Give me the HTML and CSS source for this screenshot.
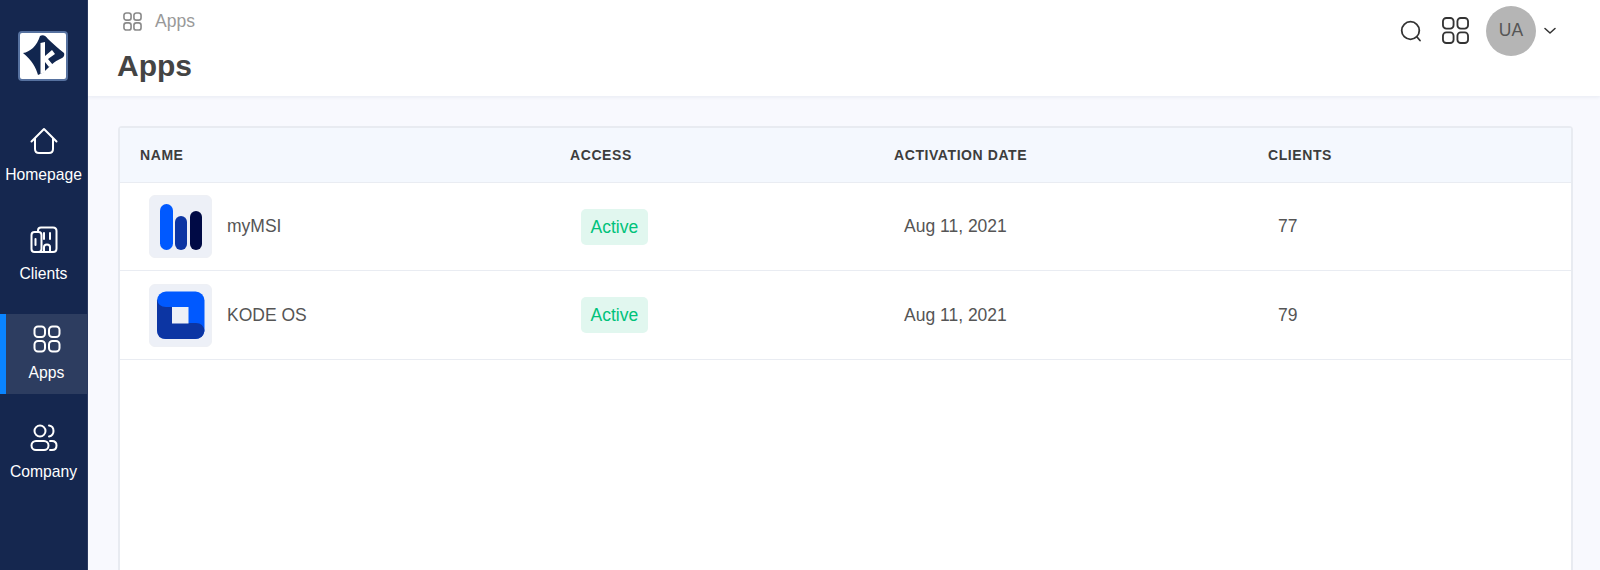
FILE: index.html
```html
<!DOCTYPE html>
<html lang="en">
<head>
<meta charset="utf-8">
<title>Apps</title>
<link rel="stylesheet" href="styles.css">
</head>
<body>
<div class="app">
  <aside class="sidebar">
    <div class="logo">
      <svg viewBox="0 0 46 46" width="46" height="46">
        <path d="M3 20 C10 19 17 13 20 3 C23 1 26 3 28 6 C33 11 38 15 44 20 C45 23 43 25 40 26 C35 28 30 33 26 37 C23 40 20 41 18 42 C16 35 12 27 3 20Z" fill="#11264f"/>
        <path d="M20.500 10 L25 9 L25 23 L32 17 L35 21 L28 26 L33 32 L29 34 L25 29 L25 39 L20.500 41Z" fill="#fff"/>
      </svg>
    </div>
    <nav class="menu">
      <a class="menu-item">
        <svg class="nav-icon" viewBox="0 0 28 28"><path d="M1.5 14.5 L14 2 L26.5 14.5 M5 11.5 V22 Q5 26 9 26 H19 Q23 26 23 22 V11.5"/></svg>
        <span>Homepage</span>
      </a>
      <a class="menu-item">
        <svg class="nav-icon" viewBox="0 0 28 28"><rect x="1.5" y="6" width="10" height="20" rx="3"/><path d="M8 6 V4.5 Q8 1.5 11 1.5 H23 Q26.500 1.500 26.500 5 V22.500 Q26.500 26 23 26 H6"/><path d="M5.500 13 V19 M14 7 V13 M20 7 V13 M14 26 V21 Q14 18.500 17 18.500 Q20 18.500 20 21 V26"/></svg>
        <span>Clients</span>
      </a>
      <a class="menu-item active">
        <svg class="nav-icon" viewBox="0 0 28 28"><rect x="1.500" y="1.500" width="10.500" height="10.500" rx="3.500"/><rect x="16" y="1.500" width="10.500" height="10.500" rx="3.500"/><rect x="1.500" y="16" width="10.500" height="10.500" rx="3.500"/><rect x="16" y="16" width="10.500" height="10.500" rx="3.500"/></svg>
        <span>Apps</span>
      </a>
      <a class="menu-item">
        <svg class="nav-icon" viewBox="0 0 28 28"><circle cx="10" cy="7" r="5.500"/><path d="M19 1.500 Q23.500 2 23.500 7 Q23.500 11.500 19 12.500"/><rect x="1.500" y="17" width="17" height="9" rx="4.500"/><path d="M20 17 H22 Q26.500 17 26.500 21.500 Q26.500 26 22 26 H20"/></svg>
        <span>Company</span>
      </a>
    </nav>
  </aside>
  <main class="main">
    <header class="topbar">
      <div class="heading">
        <div class="crumb">
          <svg class="crumb-icon" viewBox="0 0 20 20"><rect x="1" y="1" width="7.500" height="7.500" rx="2.500"/><rect x="11.500" y="1" width="7.500" height="7.500" rx="2.500"/><rect x="1" y="11.500" width="7.500" height="7.500" rx="2.500"/><rect x="11.500" y="11.500" width="7.500" height="7.500" rx="2.500"/></svg>
          <span>Apps</span>
        </div>
        <h1 class="title">Apps</h1>
      </div>
      <div class="actions">
        <svg class="search" viewBox="0 0 22 22"><circle cx="10.500" cy="10.500" r="8.800"/><path d="M17 17 L20 20.500"/></svg>
        <svg class="grid-icon" viewBox="0 0 28 28"><rect x="1" y="1" width="11" height="11" rx="3.500"/><rect x="16" y="1" width="11" height="11" rx="3.500"/><rect x="1" y="16" width="11" height="11" rx="3.500"/><rect x="16" y="16" width="11" height="11" rx="3.500"/></svg>
        <div class="avatar">UA</div>
        <svg class="chevron" viewBox="0 0 12 8"><path d="M1 1.500 L6 6 L11 1.500"/></svg>
      </div>
    </header>
    <section class="content">
      <div class="card">
        <div class="row head">
          <div>NAME</div><div>ACCESS</div><div>ACTIVATION DATE</div><div>CLIENTS</div>
        </div>
        <div class="row item">
          <div class="name">
            <span class="thumb">
              <svg viewBox="1 1 61 61" width="61" height="61">
                <rect x="11" y="9" width="13" height="46" rx="6.500" fill="#0059ff"/>
                <rect x="26" y="21" width="12" height="34" rx="6" fill="#0c35a3"/>
                <rect x="41" y="16" width="12" height="39" rx="6" fill="#000a45"/>
              </svg>
            </span>
            <span>myMSI</span>
          </div>
          <div class="access"><span class="badge">Active</span></div>
          <div class="date">Aug 11, 2021</div>
          <div class="count">77</div>
        </div>
        <div class="row item">
          <div class="name">
            <span class="thumb">
              <svg viewBox="1 1 61 61" width="61" height="61">
                <rect x="8" y="7.500" width="47.500" height="47.500" rx="9" fill="#0059ff"/>
                <path d="M8 15 Q9 23 17 23 H23 V39 H47 Q54.500 39 55.500 47 Q54 55 46 55 H17 Q8 55 8 46Z" fill="#0c35a3"/>
                <rect x="23" y="23" width="16.500" height="16.500" fill="#edf0f7"/>
              </svg>
            </span>
            <span>KODE OS</span>
          </div>
          <div class="access"><span class="badge">Active</span></div>
          <div class="date">Aug 11, 2021</div>
          <div class="count">79</div>
        </div>
      </div>
    </section>
  </main>
</div>
</body>
</html>
```
FILE: styles.css
```css
* { box-sizing: border-box; }
html, body { margin: 0; height: 100%; overflow: hidden; }
body { font-family: "Liberation Sans", Arial, sans-serif; color: #444; background: #f8f9fe; }
.app { display: flex; height: 570px; }

.sidebar { width: 88px; flex: none; background: #15274f; border-right: 1px solid #2b3a60; display: flex; flex-direction: column; align-items: stretch; padding-top: 31px; }
.logo { width: 50px; height: 50px; margin-left: 18px; background: #fff; border: 2px solid #56719f; border-radius: 4px; display: flex; }
.menu { display: flex; flex-direction: column; gap: 19px; margin-top: 35px; }
.menu-item { height: 80px; display: flex; flex-direction: column; align-items: center; padding-top: 11px; color: #fff; font-size: 15.700px; line-height: 18px; gap: 11px; }
.menu-item.active { background: #2d3d60; border-left: 6px solid #0a84ff; }
.nav-icon { width: 28px; height: 28px; fill: none; stroke: #fff; stroke-width: 2; stroke-linecap: round; stroke-linejoin: round; }

.main { flex: 1; min-width: 0; display: flex; flex-direction: column; }
.topbar { height: 96px; flex: none; background: #fff; box-shadow: 0 1px 4px rgba(30, 50, 90, .08); display: flex; justify-content: space-between; padding: 0 44px 0 29px; position: relative; }
.crumb { display: flex; align-items: center; gap: 13px; height: 21px; margin-top: 11px; margin-left: 6px; color: #999; font-size: 17.500px; }
.crumb-icon { width: 19px; height: 19px; fill: none; stroke: #8a8a8a; stroke-width: 1.700; }
.title { margin: 14px 0 0; font-size: 30px; line-height: 40px; font-weight: 700; color: #444; }
.actions { display: flex; align-items: center; height: 61px; }
.search { width: 22px; height: 22px; fill: none; stroke: #333; stroke-width: 1.800; stroke-linecap: round; }
.grid-icon { width: 27px; height: 27px; margin-left: 20px; fill: none; stroke: #333; stroke-width: 1.900; }
.avatar { width: 50px; height: 50px; margin-left: 17px; border-radius: 50%; background: #b5b5b5; color: #555; font-size: 17.500px; display: flex; align-items: center; justify-content: center; }
.chevron { width: 12px; height: 8px; margin-left: 8px; fill: none; stroke: #333; stroke-width: 1.500; stroke-linecap: round; stroke-linejoin: round; }

.content { flex: 1; min-height: 0; padding: 30px 27px 0 30px; }
.card { height: 100%; background: #fff; border: 2px solid #e8ebf1; border-bottom: 0; border-radius: 4px 4px 0 0; }
.row { display: grid; grid-template-columns: 430px 324px 374px 1fr; border-bottom: 1.500px solid #e9ecf2; }
.head { height: 55px; background: #f4f8fe; align-items: center; padding-left: 20px; font-size: 14px; font-weight: 700; color: #3d3d3d; letter-spacing: .58px; }
.item { height: 88px; align-items: center; padding-left: 20px; font-size: 17.500px; color: #555; }
.item:last-child { height: 89px; }
.name { display: flex; align-items: center; gap: 15px; padding-left: 9px; }
.thumb { width: 63px; height: 63px; flex: none; display: flex; align-items: center; justify-content: center; background: #edf0f7; border: 1px solid #eef0f5; border-radius: 6px; }
.access { padding-left: 11px; }
.badge { display: inline-block; height: 36px; line-height: 36px; padding: 0 9.500px; background: #e1f7ef; color: #00c27a; border-radius: 5px; font-size: 17.500px; }
.date { padding-left: 10px; }
.count { padding-left: 10px; }
```
